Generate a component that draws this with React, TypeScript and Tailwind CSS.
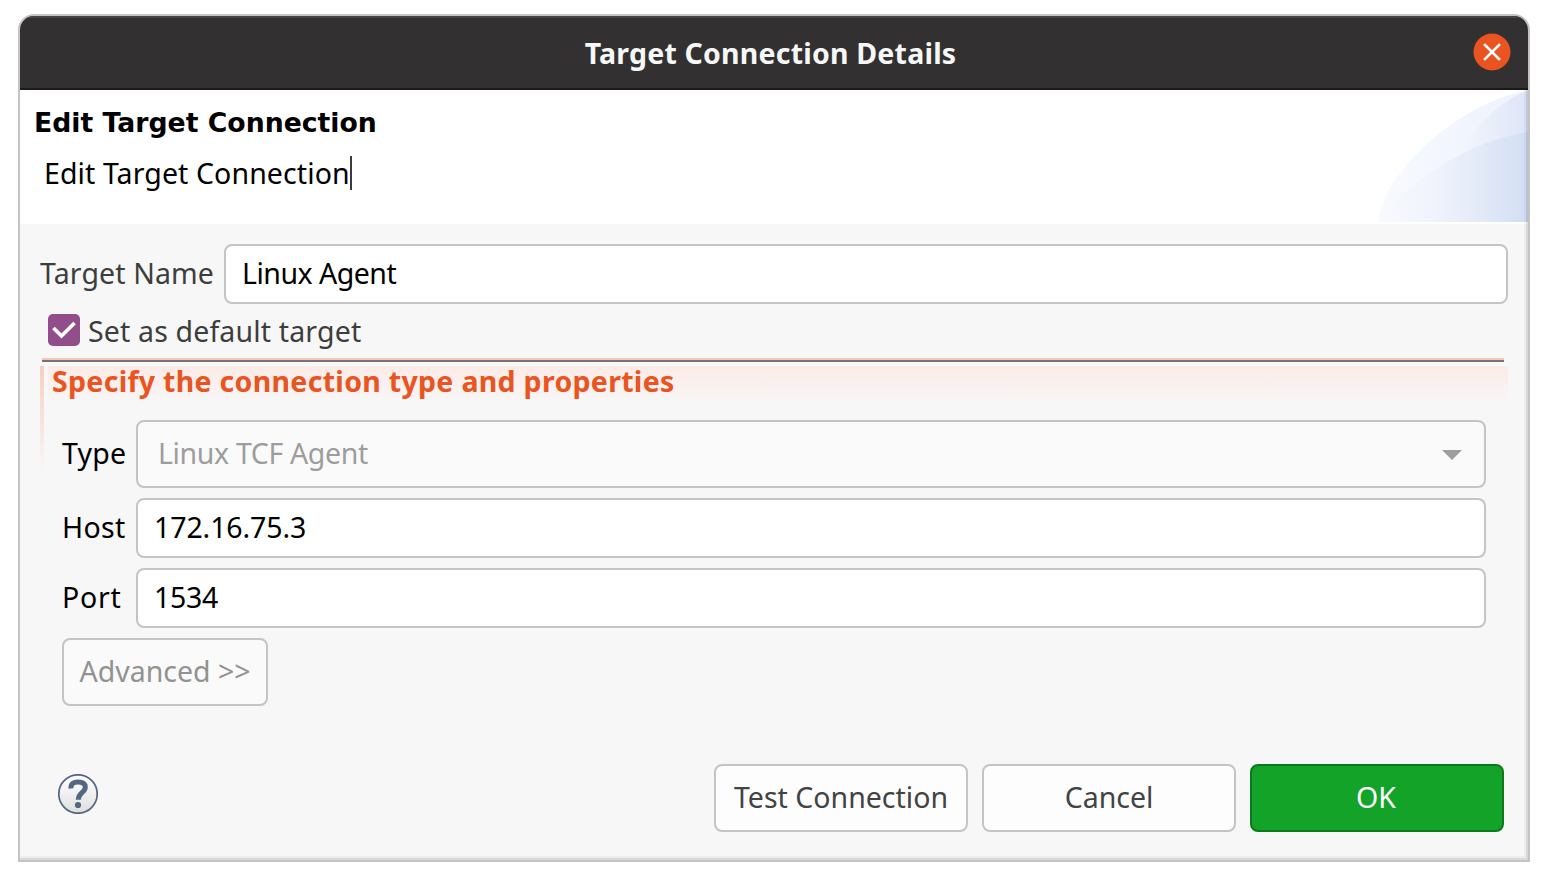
import React from "react";

const field =
  "flex items-center rounded-[8px] border-2 border-[#c4c4c4] pb-[2px] text-black whitespace-nowrap";

function BannerArt() {
  return (
    <svg className="block h-[132px] w-[152px]" viewBox="0 0 152 132">
      <defs>
        <linearGradient id="outer" x1="0" x2="1" y1="0" y2="0">
          <stop offset="0" stopColor="#f8fafd" />
          <stop offset="0.6" stopColor="#f1f5fe" />
          <stop offset="1" stopColor="#eef3fd" />
        </linearGradient>
        <linearGradient id="middle" x1="0" x2="1" y1="0" y2="0">
          <stop offset="0" stopColor="#f3f6fe" />
          <stop offset="1" stopColor="#dee5f7" />
        </linearGradient>
        <linearGradient id="inner" x1="0" x2="1" y1="0" y2="0">
          <stop offset="0" stopColor="#f8fafd" />
          <stop offset="0.35" stopColor="#f1f4fd" />
          <stop offset="0.7" stopColor="#e2e9f7" />
          <stop offset="1" stopColor="#d2def4" />
        </linearGradient>
      </defs>
      <path d="M2 132C6 84 80 14 152 0V132Z" fill="url(#outer)" />
      <path d="M82 66C94 42 122 10 152 1V132H82Z" fill="url(#middle)" />
      <path d="M2 132C3 126 8 118 18 112C50 82 100 49 152 42V132Z" fill="url(#inner)" />
    </svg>
  );
}

export default function App() {
  return (
    <div className="flex h-[880px] w-[1548px] bg-white pt-[14px] pl-[18px] font-['Noto_Sans',sans-serif] text-[28.5px] leading-[40px] text-[#3d3d3d]">
      <div className="relative flex h-[848px] w-[1512px] flex-col overflow-hidden rounded-t-[16px] border-2 border-[#c4c4c4] bg-[#f7f7f7]">
        <header className="relative flex h-[74px] shrink-0 items-center justify-center border-t-2 border-b-2 border-t-[#464445] border-b-[#1c1a1b] bg-[#323030] pr-[7px] font-bold tracking-[0.2px] text-[#f7f7f7]">
          <span>Target Connection Details</span>
          <svg className="absolute top-[15px] right-[17px] size-[38px]" viewBox="0 0 38 38">
            <circle cx="19" cy="19" r="18.5" fill="#e95420" />
            <path d="M12 12L26 26M26 12L12 26" stroke="#fff" strokeWidth="2.6" strokeLinecap="square" />
          </svg>
        </header>

        <div className="flex h-[134px] shrink-0 justify-between bg-white">
          <div className="flex flex-col items-start whitespace-nowrap text-black">
            <h1 className="mt-[13px] ml-[14px] font-['DejaVu_Sans',sans-serif] text-[26.7px] font-bold">Edit Target Connection</h1>
            <p className="mt-[10px] ml-[24px] flex items-center tracking-[0.1px]">
              Edit Target Connection
              <i className="h-[34px] w-[2px] bg-[#3d3d3d]" />
            </p>
          </div>
          <BannerArt />
        </div>

        <main className="flex flex-1 flex-col px-[20px] pt-[20px]">
          <div className="flex h-[60px] items-center">
            <label className="w-[184px] pb-[2px] tracking-[0.12px] whitespace-nowrap">Target Name</label>
            <div className={`${field} h-[60px] flex-1 bg-white pl-[16px] tracking-[-0.5px]`}>Linux Agent</div>
          </div>
          <div className="mt-[10px] flex h-[32px] items-center pl-[8px]">
            <svg className="size-[32px]" viewBox="0 0 32 32">
              <rect width="32" height="32" rx="5" fill="#924d8b" />
              <path d="M5.5 14L13.5 22L26.5 9" fill="none" stroke="#fff" strokeWidth="3.6" />
            </svg>
            <span className="ml-[8px] pt-[2px] tracking-[0.15px]">Set as default target</span>
          </div>
          <section className="mt-[12px] flex h-[112px] flex-col">
            <div className="mr-[4px] ml-[2px] h-[4px] border-t-2 border-b-2 border-t-[#f6c7b7] border-b-[#787374]" />
            <div className="mt-[4px] flex">
              <div className="h-[104px] w-[4px] bg-linear-to-b from-[#f8cdbf] to-[#f7f7f7]" />
              <h2 className="ml-[4px] h-[38px] flex-1 bg-linear-to-b from-[#fbebe7] to-[#f7f7f7] pl-[4px] leading-[30px] font-bold tracking-[0.3px] whitespace-nowrap text-[#e95420]">Specify the connection type and properties</h2>
            </div>
          </section>
          <div className="-mt-[50px] flex flex-col gap-[10px] px-[22px] text-black">
            <div className="flex items-center">
              <label className="w-[74px] pb-[2px] tracking-[0.2px]">Type</label>
              <div className={`${field} h-[68px] flex-1 justify-between bg-[#fafafa] pr-[22px] pl-[20px]`}>
                <span className="tracking-[-0.35px] text-[#9d9d9d]">Linux TCF Agent</span>
                <svg className="mt-[4px] h-[10px] w-[20px]" viewBox="0 0 20 10">
                  <path d="M0 0H20L10 10Z" fill="#9e9e9e" />
                </svg>
              </div>
            </div>
            <div className="flex items-center">
              <label className="w-[74px] pb-[2px] tracking-[0.3px]">Host</label>
              <div className={`${field} h-[60px] flex-1 bg-white pl-[16px] tracking-[-0.1px]`}>172.16.75.3</div>
            </div>
            <div className="flex items-center">
              <label className="w-[74px] pb-[2px] tracking-[0.75px]">Port</label>
              <div className={`${field} h-[60px] flex-1 bg-white pl-[16px] tracking-[-0.3px]`}>1534</div>
            </div>
            <button className={`${field} h-[68px] w-[206px] justify-center bg-[#fafafa]`}>
              <span className="text-[#929292]">Advanced &gt;&gt;</span>
            </button>
          </div>
          <footer className="mt-[58px] flex items-center gap-[14px] pr-[4px] pl-[18px]">
            <svg className="mr-auto mb-[8px] size-[40px]" viewBox="0 0 40 40">
              <defs>
                <linearGradient id="help" x1="0" x2="0" y1="0" y2="1">
                  <stop offset="0.2" stopColor="#fafafa" />
                  <stop offset="1" stopColor="#dedede" />
                </linearGradient>
              </defs>
              <circle cx="20" cy="20" r="19.2" fill="url(#help)" stroke="#536684" strokeWidth="1.7" />
              <path d="M13 14.5C12.6 9.8 15.5 8.1 20 8.1C25 8.1 27.3 10.2 27.3 13.2C27.3 18.5 20.3 18.5 20.3 25.8" fill="none" stroke="#536684" strokeWidth="5" />
              <circle cx="20" cy="31" r="3.1" fill="#536684" />
            </svg>
            <button className={`${field} h-[68px] w-[254px] justify-center bg-[#fdfdfd]`}>
              <span className="text-[#434343]">Test Connection</span>
            </button>
            <button className={`${field} h-[68px] w-[254px] justify-center bg-[#fdfdfd]`}>
              <span className="text-[#434343]">Cancel</span>
            </button>
            <button className="flex h-[68px] w-[254px] items-center justify-center rounded-[8px] border-2 border-[#0b7a1a] bg-[#12a328] pr-[2px] pb-[2px] text-white">OK</button>
          </footer>
        </main>
        <div className="pointer-events-none absolute inset-x-0 top-[74px] bottom-0 overflow-hidden">
          <div className="-mt-[4px] -ml-[4px] h-[774px] w-[1512px] shadow-[inset_-2px_-2px_0_rgba(0,0,0,0.09),inset_-4px_-4px_0_rgba(0,0,0,0.035)]" />
        </div>
      </div>
    </div>
  );
}
